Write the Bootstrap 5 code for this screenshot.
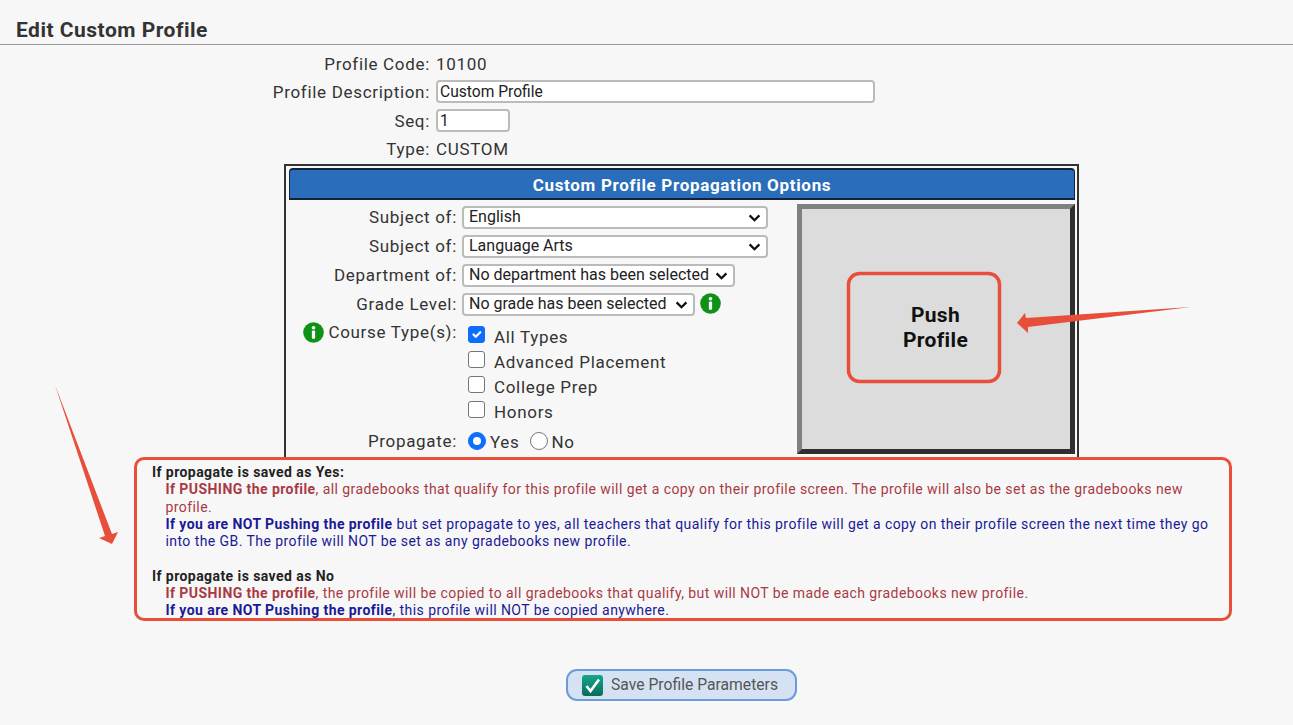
<!DOCTYPE html>
<html lang="en">
<head>
<meta charset="utf-8">
<title>Edit Custom Profile</title>
<link href="https://cdn.jsdelivr.net/npm/bootstrap@5.3.0/dist/css/bootstrap.min.css" rel="stylesheet">
<style>
html,body{height:725px;overflow:hidden}
body{background:#f7f7f7;font-family:Roboto,"Liberation Sans",sans-serif;font-size:17px;letter-spacing:.68px;color:#333;position:relative;line-height:22px}
.page-title{font-size:21px;letter-spacing:.5px;font-weight:700;line-height:24px;color:#333;padding:18px 0 2px 16px;border-bottom:1px solid #999;margin:0;height:45px}
.top-form{padding-top:8px}
.f-row{height:29px}
.f-row.txt{height:27px}
.f-row.last{height:26px}
.f-lbl{width:430px;text-align:right;margin-right:6px;flex:none;line-height:24px}
.f-row.txt .f-lbl,.f-row.last .f-lbl{line-height:22px}
.txt-in{height:23px;border:2px solid #bbb;border-radius:4px;padding:0 2px;font-size:15.6px;letter-spacing:0;line-height:19px;color:#222;background:#fff;font-family:inherit;outline:0}
.in-desc{width:439px}
.in-seq{width:74px}
.opt-box{margin:0 0 0 284px;width:795px;height:293px;border:2px solid #333;border-bottom:0;padding:2px 2px 0}
.opt-head{background:#2a6ebb;color:#fff;font-weight:700;font-size:17px;height:32px;line-height:30px;text-align:center;border:1px solid #14233a;border-width:2px 1px;border-radius:4px 4px 0 0;margin-left:1px}
.opt-body{padding-top:4px}
.opt-left{width:509px;flex:none;padding-top:2px}
.s-row{height:29px}
.s-lbl{width:169px;margin-right:5px;text-align:right;flex:none;line-height:23px}
.form-select.pick{height:23px;border:2px solid #bbb;border-radius:4px;padding:0 20px 1px 5px;font-size:16px;letter-spacing:0;line-height:18px;color:#222;font-family:inherit;box-shadow:none;background-color:#fff;background-image:url("data:image/svg+xml,%3Csvg xmlns='http://www.w3.org/2000/svg' viewBox='0 0 14 9'%3E%3Cpath d='M1.5 1.5 7 7l5.5-5.5' fill='none' stroke='%23111' stroke-width='2.6'/%3E%3C/svg%3E");background-size:13px 8px;background-position:right 5px center;background-repeat:no-repeat}
.w-a{width:306px}.w-b{width:273px}.w-c{width:233px}
.i-dot{width:21px;height:21px;flex:none;display:block}
.i-dot.after-sel{margin-left:5px}
.ct-wrap{height:107px}
.ct-lbl{line-height:20px}
.ct-list{margin-left:6px}
.ct-item{height:25px;line-height:25px}
.ct-item span{padding-top:6px}
.form-check-input.big{width:17px;height:17px;margin:0 9px 0 0;border:1px solid #767676;border-radius:3px;flex:none}
.form-check-input.rad{width:18px;height:18px;margin:0 4px 0 0;border:1px solid #767676;flex:none}
.form-check-input:checked{background-color:#0d6efd;border-color:#0d6efd}
.rad-gap{margin-right:10px;padding-top:2px}
.rad-txt{padding-top:2px}
.push-pane{width:278px;height:250px;background:#dcdcdc;border:5px solid;border-color:#808080 #2e2e2e #2e2e2e #808080;font-size:21px;letter-spacing:.35px;font-weight:700;line-height:25px;color:#111;text-align:center;flex:none;padding:0 1px 3px 0}
.note-box{margin-left:134px;width:1098px;height:164px;border:3px solid #e74f3b;border-radius:10px;background:#f7f7f7;font-size:14px;letter-spacing:.43px;line-height:17.3px;padding:4px 16px 0 15px;color:#222;position:relative}
.note-box b{font-weight:700}
.note-ind{padding-left:13.5px}
.gap-line{margin-top:17.3px}
.c-red{color:#a83a45}
.c-blue{color:#1a1a96}
.save-wrap{margin-top:48px}
.save-btn{width:231px;height:32px;background:#d5e2f3;border:2px solid #6c9bd9;border-radius:11px;color:#555;font-size:15.7px;letter-spacing:0;padding:0 0 0 14px;line-height:26px;margin-left:566px}
.save-btn:hover{background:#d5e2f3;color:#555;border-color:#6c9bd9}
.overlay{position:absolute;left:0;top:0;pointer-events:none}
</style>
</head>
<body>
<h1 class="page-title">Edit Custom Profile</h1>

<div class="top-form">
  <div class="d-flex f-row txt align-items-start"><div class="f-lbl">Profile Code:</div><div>10100</div></div>
  <div class="d-flex f-row align-items-start"><label class="f-lbl">Profile Description:</label><input class="txt-in in-desc" value="Custom Profile"></div>
  <div class="d-flex f-row align-items-start"><label class="f-lbl">Seq:</label><input class="txt-in in-seq" value="1"></div>
  <div class="d-flex f-row last align-items-start"><div class="f-lbl">Type:</div><div>CUSTOM</div></div>
</div>

<div class="opt-box">
  <div class="opt-head">Custom Profile Propagation Options</div>
  <div class="d-flex opt-body">
    <div class="opt-left">
      <div class="d-flex s-row"><label class="s-lbl">Subject of:</label><select class="form-select pick w-a"><option>English</option></select></div>
      <div class="d-flex s-row"><label class="s-lbl">Subject of:</label><select class="form-select pick w-a"><option>Language Arts</option></select></div>
      <div class="d-flex s-row"><label class="s-lbl">Department of:</label><select class="form-select pick w-b"><option>No department has been selected</option></select></div>
      <div class="d-flex s-row"><label class="s-lbl">Grade Level:</label><select class="form-select pick w-c"><option>No grade has been selected</option></select>
        <svg class="i-dot after-sel" viewBox="0 0 22 22"><circle cx="11" cy="11" r="10.8" fill="#0f9116"/><circle cx="11" cy="6" r="1.9" fill="#fff"/><rect x="9.3" y="9" width="3.4" height="8.5" rx="1" fill="#fff"/></svg>
      </div>
      <div class="d-flex ct-wrap">
        <div class="s-lbl ct-lbl d-flex justify-content-end align-items-start gap-1"><svg class="i-dot" viewBox="0 0 22 22"><circle cx="11" cy="11" r="10.8" fill="#0f9116"/><circle cx="11" cy="6" r="1.9" fill="#fff"/><rect x="9.3" y="9" width="3.4" height="8.5" rx="1" fill="#fff"/></svg><span>Course Type(s):</span></div>
        <div class="ct-list">
          <div class="d-flex align-items-center ct-item"><input class="form-check-input big" type="checkbox" checked><span>All Types</span></div>
          <div class="d-flex align-items-center ct-item"><input class="form-check-input big" type="checkbox"><span>Advanced Placement</span></div>
          <div class="d-flex align-items-center ct-item"><input class="form-check-input big" type="checkbox"><span>College Prep</span></div>
          <div class="d-flex align-items-center ct-item"><input class="form-check-input big" type="checkbox"><span>Honors</span></div>
        </div>
      </div>
      <div class="d-flex align-items-center">
        <label class="s-lbl">Propagate:</label>
        <div class="d-flex align-items-center ct-list">
          <input class="form-check-input rad" type="radio" name="pg" checked><span class="rad-gap">Yes</span>
          <input class="form-check-input rad" type="radio" name="pg"><span class="rad-txt">No</span>
        </div>
      </div>
    </div>
    <div class="push-pane d-flex align-items-center justify-content-center">Push<br>Profile</div>
  </div>
</div>

<div class="note-box">
  <div><b>If propagate is saved as Yes:</b></div>
  <div class="note-ind">
    <div class="c-red"><b>If PUSHING the profile</b>, all gradebooks that qualify for this profile will get a copy on their profile screen. The profile will also be set as the gradebooks new profile.</div>
    <div class="c-blue"><b>If you are NOT Pushing the profile</b> but set propagate to yes, all teachers that qualify for this profile will get a copy on their profile screen the next time they go into the GB. The profile will NOT be set as any gradebooks new profile.</div>
  </div>
  <div class="gap-line"><b>If propagate is saved as No</b></div>
  <div class="note-ind">
    <div class="c-red"><b>If PUSHING the profile</b>, the profile will be copied to all gradebooks that qualify, but will NOT be made each gradebooks new profile.</div>
    <div class="c-blue"><b>If you are NOT Pushing the profile</b>, this profile will NOT be copied anywhere.</div>
  </div>
</div>

<div class="save-wrap d-flex">
  <button type="button" class="btn save-btn d-flex align-items-center gap-2">
    <svg width="21" height="21" viewBox="0 0 21 21"><defs><linearGradient id="tg" x1="0" y1="0" x2="0" y2="1"><stop offset="0" stop-color="#14a88a"/><stop offset="1" stop-color="#0b6b5c"/></linearGradient></defs><rect width="21" height="21" rx="3" fill="url(#tg)"/><path d="M4.5 11l4 5L17 4.5" fill="none" stroke="#fff" stroke-width="2.6"/></svg>
    <span>Save Profile Parameters</span>
  </button>
</div>

<svg class="overlay" width="1293" height="725" viewBox="0 0 1293 725">
  <rect x="848.5" y="273.5" width="151" height="108" rx="11" fill="none" stroke="#e74f3b" stroke-width="3.5"/>
  <polygon points="1017,323 1025,313 1026,318 1191,307 1028,327 1028,333" fill="#e74f3b"/>
  <polygon points="55,385 112,534 118,532 112,544 99,538 105,536" fill="#e74f3b"/>
</svg>
<script src="https://cdn.jsdelivr.net/npm/bootstrap@5.3.0/dist/js/bootstrap.bundle.min.js"></script>
</body>
</html>
